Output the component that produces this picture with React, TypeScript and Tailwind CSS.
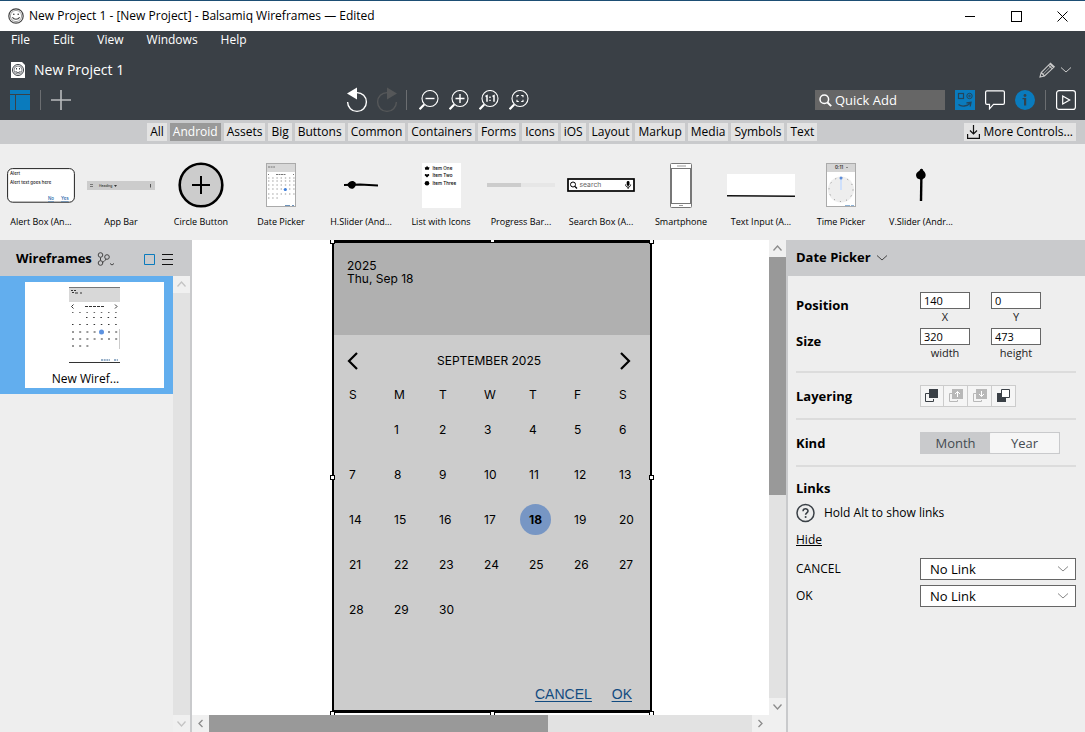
import { useState, type ReactNode } from "react";
import clsx from "clsx";

const MENUS = ["File", "Edit", "View", "Windows", "Help"];

const CATEGORIES = [
  "All",
  "Android",
  "Assets",
  "Big",
  "Buttons",
  "Common",
  "Containers",
  "Forms",
  "Icons",
  "iOS",
  "Layout",
  "Markup",
  "Media",
  "Symbols",
  "Text",
];

const WEEKDAYS = ["S", "M", "T", "W", "T", "F", "S"];

// September 2025 starts on a Monday
const WEEKS = [0, 1, 2, 3, 4].map((week) =>
  WEEKDAYS.map((_, day) => {
    const date = week * 7 + day;
    return date >= 1 && date <= 30 ? date : null;
  })
);

/* ---------- small icons ---------- */

function Smiley({ className }: { className?: string }) {
  return (
    <svg className={className} viewBox="0 0 16 16" fill="none" stroke="#444">
      <circle cx="8" cy="8" r="7.2" strokeWidth="1.2" fill="#fff" />
      <circle cx="8" cy="8" r="5.6" strokeWidth="0.5" />
      <circle cx="5.8" cy="6.2" r="0.8" fill="#333" stroke="none" />
      <circle cx="10.2" cy="6.2" r="0.8" fill="#333" stroke="none" />
      <path d="M4.4 9.2c1.4 2.8 5.8 2.8 7.2 0" strokeWidth="1.1" />
    </svg>
  );
}

function Chevron({ className }: { className?: string }) {
  return (
    <svg className={className} viewBox="0 0 12 6" width="12" height="6" fill="none" stroke="currentColor">
      <path d="M1 0.5l5 4.5 5-4.5" />
    </svg>
  );
}

function UndoIcon({ redo = false }: { redo?: boolean }) {
  return (
    <svg
      className={redo ? "-scale-x-100 text-[#555759]" : "text-white"}
      width="22"
      height="26"
      viewBox="0 0 22 26"
      fill="none"
      stroke="currentColor"
    >
      <path d="M11 5.6A9.4 9.4 0 1 1 1.6 15" strokeWidth="1.4" />
      <path d="M1 6.5L11 0.5v12z" fill="currentColor" stroke="none" />
    </svg>
  );
}

function ZoomIcon({ children }: { children: ReactNode }) {
  return (
    <svg width="20" height="21" viewBox="0 0 20 21" fill="none" stroke="#fff">
      <circle cx="11" cy="8.5" r="8" strokeWidth="1.1" />
      <path d="M5.2 14.4L0.6 19.2" strokeWidth="2.2" />
      {children}
    </svg>
  );
}

function ScrollArrow({ dir, faded }: { dir: "up" | "down" | "left" | "right"; faded?: boolean }) {
  const paths = {
    up: "M4.5 10.5L8.5 6l4 4.5",
    down: "M4.5 6.5l4 4.5 4-4.5",
    left: "M10.5 5L7 8.5l3.5 3.5",
    right: "M6.5 5L10 8.5 6.5 12",
  };
  return (
    <button
      type="button"
      aria-label={`Scroll ${dir}`}
      className={clsx("size-[17px] shrink-0 bg-[#f0f0f0]", faded ? "text-[#c4c4c4]" : "text-[#8c8c8c]")}
    >
      <svg width="17" height="17" viewBox="0 0 17 17" fill="none" stroke="currentColor" strokeWidth="1.3">
        <path d={paths[dir]} />
      </svg>
    </button>
  );
}

/* ---------- library thumbnails ---------- */

function CalendarThumb() {
  return (
    <svg width="30" height="44" viewBox="0 0 30 44">
      <rect x="0.5" y="0.5" width="29" height="43" fill="#fff" stroke="#aaa" />
      <rect x="1" y="1" width="28" height="8" fill="#d8d8d8" />
      <path d="M2 4h7" stroke="#777" strokeDasharray="2 0.6" />
      <path d="M10 11.5h10" stroke="#777" strokeDasharray="2 0.5" />
      <path d="M2 11.5h1M27 11.5h1" stroke="#777" />
      {[15, 18, 22, 26, 31].map((y) => (
        <path key={y} d={`M2 ${y}h27`} stroke="#999" strokeWidth="1.1" strokeDasharray="1.4 2.8" />
      ))}
      <path d="M2 35h10" stroke="#999" strokeWidth="1.1" strokeDasharray="1.4 2.8" />
      <circle cx="19.3" cy="26.5" r="1.6" fill="#3f7fdc" />
      <path d="M19 42.5h9" stroke="#6d93bb" strokeDasharray="5 2" />
    </svg>
  );
}

const CONTROLS: { label: string; art: ReactNode }[] = [
  {
    label: "Alert Box (An...",
    art: (
      <svg width="68" height="35" viewBox="0 0 68 35" fontFamily="Inter, sans-serif" fontSize="4.4">
        <rect x="0.6" y="0.6" width="66.8" height="33.6" rx="5" fill="#fff" stroke="#222" />
        <g fill="#222" fontWeight="500">
          <text x="3" y="7">Alert</text>
          <text x="3" y="16.4">Alert text goes here</text>
        </g>
        <g fill="#1c63a8" textDecoration="underline" fontWeight="500">
          <text x="41" y="32">No</text>
          <text x="54" y="32">Yes</text>
        </g>
      </svg>
    ),
  },
  {
    label: "App Bar",
    art: (
      <svg width="68" height="9" viewBox="0 0 68 9">
        <rect width="68" height="9" fill="#ccc" />
        <path d="M3 3.5h3M3 5.5h3" stroke="#777" />
        <text x="12" y="6" fontFamily="Inter, sans-serif" fontSize="3.4" fill="#111">Heading</text>
        <path d="M27 4h3l-1.5 2z" fill="#333" />
        <path d="M63.5 3v3.5" stroke="#555" />
      </svg>
    ),
  },
  {
    label: "Circle Button",
    art: (
      <svg width="46" height="46" viewBox="0 0 46 46" stroke="#000">
        <circle cx="23" cy="23" r="21.3" fill="#ccc" strokeWidth="2.6" />
        <path d="M14 23h18M23 14v18" strokeWidth="2" />
      </svg>
    ),
  },
  { label: "Date Picker", art: <CalendarThumb /> },
  {
    label: "H.Slider (And...",
    art: (
      <svg width="34" height="12" viewBox="0 0 34 12">
        <path d="M0 6l16-0.4 18 1" stroke="#000" strokeWidth="2" fill="none" />
        <path d="M3 6C5 2 9 0.5 11.5 3.5c1.5 4-2.500 8-6 5.500z" />
      </svg>
    ),
  },
  {
    label: "List with Icons",
    art: (
      <svg width="39" height="45" viewBox="0 0 39 45" fontFamily="Inter, sans-serif" fontWeight="500" fontSize="4.6">
        <rect width="39" height="45" fill="#fff" />
        <path d="M5 2.8l1 1.5h1.5L6.8 6.800H3.200L2.800 4.300h1.400z" />
        <path d="M5 14.5l-2.300-2.300c0-1.600 1.800-1.700 2.300-0.500 0.500-1.200 2.300-1.100 2.300 0.500z" />
        <circle cx="5" cy="20.2" r="2.3" />
        <text x="10.500" y="6.700">Item One</text>
        <text x="10.500" y="14">Item Two</text>
        <text x="10.500" y="21.700">Item Three</text>
      </svg>
    ),
  },
  {
    label: "Progress Bar...",
    art: (
      <svg width="68" height="4" viewBox="0 0 68 4">
        <rect width="68" height="4" fill="#e6e6e6" />
        <rect width="34" height="4" fill="#ccc" />
      </svg>
    ),
  },
  {
    label: "Search Box (A...",
    art: (
      <svg width="68" height="14" viewBox="0 0 68 14" fill="none">
        <rect x="1" y="1" width="66" height="12" fill="#fff" stroke="#000" strokeWidth="1.7" />
        <circle cx="6" cy="6.500" r="2.500" stroke="#000" />
        <path d="M8 8.500l2 2" stroke="#000" strokeWidth="1.2" />
        <text x="12.500" y="9.200" fontFamily="Inter, sans-serif" fontSize="6.800" fill="#666">search</text>
        <rect x="59.700" y="3" width="2.800" height="5" rx="1.400" fill="#000" />
        <path d="M58.500 6.500c0 3.500 5.200 3.500 5.200 0M61.100 9v2" stroke="#000" strokeWidth="0.9" />
      </svg>
    ),
  },
  {
    label: "Smartphone",
    art: (
      <svg width="22" height="45" viewBox="0 0 22 45" fill="#fff" stroke="#777">
        <rect x="0.5" y="0.5" width="21" height="44" rx="1" />
        <rect x="1.5" y="5.5" width="19" height="35" />
        <path d="M7 3h9M9 42.5h4" stroke="#999" />
      </svg>
    ),
  },
  {
    label: "Text Input (A...",
    art: (
      <svg width="68" height="23" viewBox="0 0 68 23">
        <rect width="68" height="22" fill="#fff" />
        <path d="M0 21.8l68 0.4" stroke="#111" strokeWidth="1.6" />
      </svg>
    ),
  },
  {
    label: "Time Picker",
    art: (
      <svg width="30" height="44" viewBox="0 0 30 44">
        <rect x="0.5" y="0.5" width="29" height="43" fill="#fff" stroke="#aaa" />
        <rect x="1" y="1" width="28" height="8" fill="#d5d5d5" />
        <text x="9" y="6.2" fontFamily="Inter, sans-serif" fontWeight="600" fontSize="4.500" fill="#333">0:11</text>
        <path d="M20 4.500h2" stroke="#888" />
        <circle cx="15" cy="26.500" r="13" fill="#eee" />
        <circle cx="15" cy="26.500" r="12" fill="none" stroke="#888" strokeDasharray="1 5.283" />
        <path d="M15 27V16" stroke="#cfe0fb" strokeWidth="2" />
        <circle cx="15" cy="15" r="1.500" fill="#5c8ddb" />
        <path d="M19 42.500h9" stroke="#8fb3d6" strokeDasharray="5 1" />
      </svg>
    ),
  },
  {
    label: "V.Slider (Andr...",
    art: (
      <svg width="12" height="34" viewBox="0 0 12 34">
        <path d="M6.500 1L6 33" stroke="#000" strokeWidth="2.4" />
        <path d="M6.500 0.500l1.500 1.700c3 2.500 3.300 5.500 1.800 7.500L6.500 12 2.500 10.500C0 7.500 1 4.500 4 3z" />
      </svg>
    ),
  },
];

/* ---------- page parts ---------- */

function TitleBar() {
  return (
    <header className="flex h-[31px] shrink-0 items-center border-t border-[#1d4e74] bg-white pl-2">
      <Smiley className="size-4" />
      <h1 className="ml-[5px] flex-1 text-xs">New Project 1 - [New Project] - Balsamiq Wireframes — Edited</h1>
      <div className="flex h-full items-center">
        <button type="button" aria-label="Minimize" className="flex h-full w-[46px] items-center justify-center">
          <span className="h-px w-[10px] bg-black" />
        </button>
        <button type="button" aria-label="Maximize" className="flex h-full w-[46px] items-center justify-center">
          <span className="size-[11px] border border-black" />
        </button>
        <button type="button" aria-label="Close" className="flex h-full w-[46px] items-center justify-center">
          <svg width="11" height="11" viewBox="0 0 11 11" stroke="#000">
            <path d="M0.5 0.5l10 10M10.5 0.5l-10 10" />
          </svg>
        </button>
      </div>
    </header>
  );
}

function Toolbar() {
  return (
    <div className="flex h-10 items-center pr-[9px] pl-[10px]">
      <button type="button" aria-label="Toggle navigator">
        <svg width="20" height="20" viewBox="0 0 20 20" fill="#0a7bbd">
          <path d="M0 0h20v4H0zM0 5h5v15H0zM6 5h14v15H6z" />
        </svg>
      </button>
      <span className="mx-[10px] h-5 w-px bg-[#6b6e71]" />
      <button type="button" aria-label="Add wireframe">
        <svg width="20" height="20" viewBox="0 0 20 20" stroke="#b9bbbd" strokeWidth="1.6">
          <path d="M0 10h20M10 0v20" />
        </svg>
      </button>

      <div className="flex flex-1 items-center justify-center pr-3">
        <button type="button" aria-label="Undo">
          <UndoIcon />
        </button>
        <button type="button" aria-label="Redo" className="ml-2">
          <UndoIcon redo />
        </button>
        <span className="mr-3 ml-2 h-5 w-px bg-[#6b6e71]" />
        <div className="flex gap-[10px]">
          <button type="button" aria-label="Zoom out">
            <ZoomIcon>
              <path d="M6.500 8.500h9" strokeWidth="1.4" />
            </ZoomIcon>
          </button>
          <button type="button" aria-label="Zoom in">
            <ZoomIcon>
              <path d="M6.500 8.500h9M11 4v9" strokeWidth="1.4" />
            </ZoomIcon>
          </button>
          <button type="button" aria-label="Actual size">
            <ZoomIcon>
              <path d="M6.500 6.500l1.500-0.800v6M13.500 6.500l1.500-0.800v6" strokeWidth="1.5" />
              <path d="M11 6.500v1.400M11 9.700v1.400" strokeWidth="1.4" />
            </ZoomIcon>
          </button>
          <button type="button" aria-label="Zoom to fit">
            <ZoomIcon>
              <path d="M9.800 5.500H8V7.300M12.200 5.500H14V7.300M8 9.700V11.500H9.800M14 9.700V11.500H12.200" strokeWidth="1.1" />
            </ZoomIcon>
          </button>
        </div>
      </div>

      <label className="flex h-5 w-[130px] items-center bg-[#666] pl-1">
        <svg className="shrink-0" width="13" height="13" viewBox="0 0 13 13" fill="none" stroke="#fff">
          <circle cx="5.300" cy="5.300" r="4.300" strokeWidth="1.5" />
          <path d="M8.500 8.500l3.700 3.700" strokeWidth="1.9" />
        </svg>
        <input
          aria-label="Quick Add"
          placeholder="Quick Add"
          className="ml-[3px] w-full min-w-0 bg-transparent text-[13px] leading-5 text-white outline-none placeholder:text-white"
        />
      </label>
      <div className="ml-[10px] flex items-center gap-[10px]">
        <button type="button" aria-label="UI library">
          <svg width="20" height="20" viewBox="0 0 20 20" fill="none" stroke="#24455c">
            <rect width="20" height="20" fill="#0a7bbd" stroke="none" />
            <rect x="3.500" y="3.500" width="5" height="5" strokeWidth="1.2" />
            <circle cx="14.500" cy="6" r="2.700" />
            <circle cx="14.500" cy="6" r="0.800" />
            <path d="M3.500 14.500c3 2.500 8.500 2 12-1.500M11.500 13l4.500-0.800-0.800 4.300" strokeWidth="1.3" />
          </svg>
        </button>
        <button type="button" aria-label="Comments">
          <svg width="20" height="20" viewBox="0 0 20 20" fill="none" stroke="#fff" strokeWidth="1.2">
            <path d="M2 0.800h16q1.400 0 1.400 1.400v10.800q0 1.400-1.400 1.400H8.500L4.500 18.800V14.400H2Q0.600 14.400 0.600 13V2.200Q0.600 0.800 2 0.800z" />
          </svg>
        </button>
        <button type="button" aria-label="Properties">
          <svg width="20" height="20" viewBox="0 0 20 20">
            <circle cx="10" cy="10" r="10" fill="#0a7bbd" />
            <path d="M7.500 8h3.700v7.500H9V9.200H7.500z" fill="#33434e" />
            <circle cx="10" cy="5.500" r="1.400" fill="#33434e" />
          </svg>
        </button>
        <span className="h-5 w-px bg-[#6b6e71]" />
        <button type="button" aria-label="Present">
          <svg width="20" height="20" viewBox="0 0 20 20" fill="none" stroke="#fff" strokeWidth="1.2">
            <rect x="0.600" y="0.600" width="18.800" height="18.800" rx="2.500" />
            <path d="M6.700 6l7 4-7 4z" />
          </svg>
        </button>
      </div>
    </div>
  );
}

function Library() {
  const [active, setActive] = useState("Android");
  return (
    <section>
      <div className="flex h-6 items-center bg-[#c9cacc] pr-[9px] text-xs leading-[18px]">
        <div className="flex flex-1 justify-center gap-[3px]">
          {CATEGORIES.map((name) => (
            <button
              key={name}
              type="button"
              onClick={() => setActive(name)}
              className={clsx("px-[3px]", name === active ? "bg-[#999] text-white" : "bg-[#e3e3e3]")}
            >
              {name}
            </button>
          ))}
        </div>
        <button type="button" className="flex items-center gap-[3px] bg-[#e3e3e3] px-[3px]">
          <svg width="13" height="14" viewBox="0 0 13 14" fill="none" stroke="#111" strokeWidth="1.2">
            <path d="M6.500 0v8.500M3 5.500l3.500 3.500L10 5.500M0.600 9v4.400h11.800V9" />
          </svg>
          More Controls...
        </button>
      </div>
      <ul className="flex h-24 overflow-hidden bg-[#eee] pl-px">
        {CONTROLS.map((control) => (
          <li key={control.label} className="flex w-20 shrink-0 flex-col items-center pt-[17px]">
            <div className="flex h-12 items-center">{control.art}</div>
            <span className="mt-[6px] text-[9px] leading-[14px] whitespace-nowrap">{control.label}</span>
          </li>
        ))}
      </ul>
    </section>
  );
}

function Navigator() {
  return (
    <aside className="flex w-48 shrink-0 flex-col border-r-2 border-[#c9cacc] bg-[#eee]">
      <div className="flex h-9 shrink-0 items-center bg-[#c9cacc] pt-[2px] pr-[17px] pl-4">
        <h2 className="text-[13px] font-bold">Wireframes</h2>
        <button type="button" aria-label="Branches" className="ml-[5px] flex-1">
          <svg width="18" height="14" viewBox="0 0 18 14" fill="none" stroke="#444">
            <circle cx="3.500" cy="3" r="2.300" />
            <circle cx="3.500" cy="11" r="2.300" />
            <circle cx="10" cy="5" r="2.300" />
            <path d="M3.500 5.500v3M9 7c-1 2-2.500 3-4 3.500M13 11.500l2 1.500 2-1.500" />
          </svg>
        </button>
        <button type="button" aria-label="Thumbnail view">
          <svg width="11" height="11" viewBox="0 0 11 11" fill="none" stroke="#0a7bbd">
            <path d="M0.5 0.5h10v10h-10z" />
          </svg>
        </button>
        <button type="button" aria-label="List view" className="ml-[7px]">
          <svg width="11" height="11" viewBox="0 0 11 11" stroke="#111">
            <path d="M0 0.5h11M0 5.5h11M0 10.5h11" />
          </svg>
        </button>
      </div>
      <div className="flex min-h-0 flex-1">
        <div className="flex-1">
          <button type="button" className="flex w-full bg-[#62aeee] py-[6px] pr-[9px] pl-[25px]">
            <span className="flex flex-1 flex-col items-center bg-white pt-[5px]">
              <svg width="51" height="76" viewBox="0 0 51 76" stroke="#333">
                <rect width="51" height="15" fill="#d8d8d8" stroke="none" />
                <path d="M0 0.500h51" stroke="#777" />
                <path d="M2 3.500h2M5 3.500h2M3 5.500h2M6 6h3M11 6h2" />
                <path d="M4.500 17.500l-2 2 2 2M46 17.500l2 2-2 2" fill="none" />
                <path d="M16 19.500h19" strokeDasharray="3 1" />
                <path d="M3 25.500h47" stroke="#666" strokeDasharray="1.500 5.700" />
                <path d="M17 30.500h33" strokeDasharray="1.500 5.700" />
                <path d="M3 37.500h47" strokeDasharray="1.500 5.700" />
                <path d="M3 45h47M3 52h47M3 59h17" strokeDasharray="2 5.200" />
                <circle cx="32.500" cy="45" r="2.500" fill="#5c92e0" stroke="none" />
                <path d="M32 73h9M45 73h4" stroke="#2d5f91" strokeDasharray="2 0.700" />
                <path d="M0 75.500h51" />
                <path d="M50.500 42v20" stroke="#ccc" />
              </svg>
              <span className="mt-[7px] pr-[18px] text-xs leading-[18px]">New Wiref...</span>
            </span>
          </button>
        </div>
        <div className="flex w-[17px] flex-col justify-between bg-[#e2e2e2]">
          <ScrollArrow dir="up" faded />
          <ScrollArrow dir="down" faded />
        </div>
      </div>
    </aside>
  );
}

function Handle({ className }: { className: string }) {
  return <span className={clsx("absolute size-[5px] border border-black bg-white", className)} />;
}

function DatePicker() {
  return (
    <div className="absolute top-0 left-[140px] flex h-[473px] w-80 flex-col border-2 border-t-3 border-b-3 border-black bg-[#ccc] font-[Inter,sans-serif] text-xs">
      <div className="h-[92px] bg-[#b0b0b0] px-[13px] pt-4 leading-[13px]">
        <p>2025</p>
        <p>Thu, Sep 18</p>
      </div>
      <div className="flex h-12 items-center justify-between pt-1 pr-[19px] pl-[13px]">
        <button type="button" aria-label="Previous month">
          <svg width="12" height="18" viewBox="0 0 12 18" fill="none" stroke="#000" strokeWidth="2.2">
            <path d="M10 1L2 9l8 8" />
          </svg>
        </button>
        <span>SEPTEMBER 2025</span>
        <button type="button" aria-label="Next month">
          <svg width="12" height="18" viewBox="0 0 12 18" fill="none" stroke="#000" strokeWidth="2.2">
            <path d="M2 1l8 8-8 8" />
          </svg>
        </button>
      </div>
      <table className="ml-[6px] table-fixed">
        <thead>
          <tr className="h-6">
            {WEEKDAYS.map((day, i) => (
              <th key={i} className={clsx("pl-[9px] text-left font-normal", i < 6 && "w-[45px]")}>
                {day}
              </th>
            ))}
          </tr>
        </thead>
        <tbody>
          {WEEKS.map((week, i) => (
            <tr key={i} className="h-[45px]">
              {week.map((date, j) => (
                <td key={j} className="p-0">
                  <span
                    className={clsx(
                      "flex size-[31px] items-center pl-[9px]",
                      date === 18 && "rounded-full bg-[#7796c4] font-bold"
                    )}
                  >
                    {date}
                  </span>
                </td>
              ))}
            </tr>
          ))}
        </tbody>
      </table>
      <div className="mt-auto flex justify-end gap-5 pr-[18px] pb-[6px] font-['Liberation_Sans',sans-serif] text-sm leading-5 text-[#124b80] underline underline-offset-2">
        <a href="#cancel">CANCEL</a>
        <a href="#ok">OK</a>
      </div>
      <Handle className="-top-1 -left-1" />
      <Handle className="-top-[5px] left-[156px]" />
      <Handle className="-top-1 -right-1" />
      <Handle className="top-[232px] -left-1" />
      <Handle className="top-[232px] -right-1" />
      <Handle className="-bottom-[6px] -left-1" />
      <Handle className="-bottom-[6px] left-[156px]" />
      <Handle className="-right-1 -bottom-[6px]" />
    </div>
  );
}

function Canvas() {
  return (
    <main className="flex min-w-0 flex-1">
      <div className="flex min-w-0 flex-1 flex-col">
        <div className="relative flex-1 overflow-hidden bg-white">
          <DatePicker />
        </div>
        <div className="flex h-[17px] bg-[#e2e2e2]">
          <ScrollArrow dir="left" />
          <div className="flex-1">
            <div className="h-full w-5/8 bg-[#999]" />
          </div>
          <ScrollArrow dir="right" />
        </div>
      </div>
      <div className="flex w-[17px] flex-col bg-[#e2e2e2]">
        <ScrollArrow dir="up" />
        <div className="flex-1">
          <div className="h-[54%] bg-[#999]" />
        </div>
        <ScrollArrow dir="down" />
        <div className="size-[17px] bg-[#f0f0f0]" />
      </div>
    </main>
  );
}

function NumberField({ id, label, value }: { id: string; label: string; value: string }) {
  return (
    <div className="flex w-[50px] flex-col items-center">
      <input
        id={id}
        defaultValue={value}
        className="h-[17px] w-full border border-[#666] bg-white px-[3px] text-[11px] leading-[15px]"
      />
      <label htmlFor={id} className="text-[11px] leading-4 text-[#222]">
        {label}
      </label>
    </div>
  );
}

function Row({ title, className, children }: { title: string; className?: string; children: ReactNode }) {
  return (
    <div className={clsx("flex", className)}>
      <h3 className="w-[124px] text-[13px] leading-[26px] font-bold">{title}</h3>
      {children}
    </div>
  );
}

function LinkSelect({ name }: { name: string }) {
  const id = `link-${name.toLowerCase()}`;
  return (
    <div className="flex h-[22px] items-center">
      <label htmlFor={id} className="w-[124px] text-xs">
        {name}
      </label>
      <div className="relative flex flex-1">
        <select
          id={id}
          className="h-[22px] w-full appearance-none border border-[#666] bg-white pl-[9px] text-[13px] leading-5"
        >
          <option>No Link</option>
        </select>
        <Chevron className="pointer-events-none absolute top-2 right-[7px] text-[#888]" />
      </div>
    </div>
  );
}

const LAYERING: { label: string; art: ReactNode; disabled?: boolean }[] = [
  {
    label: "Bring to front",
    art: (
      <>
        <path d="M4 4.5H0.5v8h8V10" fill="none" stroke="#3a4046" />
        <path d="M4 0h9v9H4z" fill="#3a4046" />
      </>
    ),
  },
  {
    label: "Bring forward",
    disabled: true,
    art: (
      <>
        <path d="M3 4.5H0.5v8h8V11" fill="none" stroke="#b8b8b8" />
        <path d="M3 0h11v10H3z" fill="#b8b8b8" />
        <path d="M8.5 8V2.5M6 5l2.500-2.500L11 5" fill="none" stroke="#fff" />
      </>
    ),
  },
  {
    label: "Send backward",
    disabled: true,
    art: (
      <>
        <path d="M3 4.5H0.5v8h8V11" fill="none" stroke="#b8b8b8" />
        <path d="M3 0h11v10H3z" fill="#b8b8b8" />
        <path d="M8.5 2v5.500M6 5l2.500 2.500L11 5" fill="none" stroke="#fff" />
      </>
    ),
  },
  {
    label: "Send to back",
    art: (
      <>
        <path d="M0 4h9v9H0z" fill="#3a4046" />
        <path d="M4.5 0.5h8v8h-8z" fill="#fff" stroke="#3a4046" />
      </>
    ),
  },
];

function Inspector() {
  const [kind, setKind] = useState("Month");
  return (
    <aside className="w-[299px] shrink-0 border-l-2 border-[#c9cacc] bg-[#eee]">
      <div className="flex h-9 items-center gap-[5px] bg-[#c9cacc] pl-2">
        <h2 className="text-[13px] font-bold">Date Picker</h2>
        <Chevron className="text-[#444]" />
      </div>
      <div className="pr-[9px] pl-2">
        <Row title="Position" className="pt-4">
          <div className="flex gap-[21px]">
            <NumberField id="x" label="X" value="140" />
            <NumberField id="y" label="Y" value="0" />
          </div>
        </Row>
        <Row title="Size" className="pt-[3px]">
          <div className="flex gap-[21px]">
            <NumberField id="width" label="width" value="320" />
            <NumberField id="height" label="height" value="473" />
          </div>
        </Row>
        <hr className="mt-[10px] border-t-2 border-[#dcdcdc]" />
        <Row title="Layering" className="h-[45px] items-center">
          <div className="flex border border-[#ccc] bg-[#f5f5f5]">
            {LAYERING.map((item, i) => (
              <button
                key={item.label}
                type="button"
                aria-label={item.label}
                disabled={item.disabled}
                className={clsx("flex h-5 items-center justify-center", i ? "w-6 border-l border-[#ccc]" : "w-[22px]")}
              >
                <svg width="14" height="13" viewBox="0 0 14 13">
                  {item.art}
                </svg>
              </button>
            ))}
          </div>
        </Row>
        <hr className="border-t-2 border-[#dcdcdc]" />
        <Row title="Kind" className="h-[45px] items-center">
          <div className="flex h-[22px] w-[140px] border border-[#c9cacc] text-[13px] leading-5 text-[#444b51]">
            {["Month", "Year"].map((name) => (
              <button
                key={name}
                type="button"
                onClick={() => setKind(name)}
                className={clsx("flex-1", kind === name ? "bg-[#c9cacc]" : "rounded-xs bg-[#f6f6f6]")}
              >
                {name}
              </button>
            ))}
          </div>
        </Row>
        <hr className="border-t-2 border-[#dcdcdc]" />
        <h3 className="mt-[11px] text-[13px] leading-5 font-bold">Links</h3>
        <div className="mt-[5px] flex items-center gap-2 text-xs">
          <svg width="20" height="20" viewBox="0 0 20 20" fill="none" stroke="#3a4046">
            <circle cx="9.500" cy="10" r="8.500" strokeWidth="1.5" />
            <path d="M7 8.200c0-3.300 5-3.200 5-0.300 0 1.900-2.400 1.900-2.400 3.900" strokeWidth="1.6" />
            <circle cx="9.600" cy="14" r="1" fill="#3a4046" stroke="none" />
          </svg>
          Hold Alt to show links
        </div>
        <a href="#hide" className="mt-2 block w-fit text-xs leading-[18px] underline">
          Hide
        </a>
        <div className="mt-[9px] flex flex-col gap-[5px]">
          <LinkSelect name="CANCEL" />
          <LinkSelect name="OK" />
        </div>
      </div>
    </aside>
  );
}

export default function App() {
  return (
    <div className="flex h-screen flex-col overflow-hidden font-['Open_Sans','Noto_Sans',sans-serif] text-black">
      <TitleBar />
      <div className="shrink-0 bg-[#3a4046] text-white">
        <nav className="flex h-[17px] items-center gap-[23px] pl-[11px] text-xs leading-4">
          {MENUS.map((menu) => (
            <button key={menu} type="button">
              {menu}
            </button>
          ))}
        </nav>
        <div className="flex h-8 items-center pt-3 pr-[13px] pl-[11px]">
          <svg width="14" height="16" viewBox="0 0 14 16" fill="none" stroke="#3a4046">
            <path d="M0 0h11l3 3v13H0z" fill="#fff" stroke="none" />
            <circle cx="7" cy="8" r="5.500" />
            <circle cx="7" cy="8" r="4" strokeWidth="0.6" />
            <path d="M5.500 6v1.500M8.500 6v1.500M4.500 9c1 2 4 2 5 0" />
          </svg>
          <h2 className="ml-[9px] flex-1 text-sm leading-5">New Project 1</h2>
          <button type="button" aria-label="Edit options" className="flex items-center gap-1 text-[#c9c9c9]">
            <svg width="17" height="16" viewBox="0 0 17 16" fill="none" stroke="currentColor" strokeWidth="1.1">
              <path d="M1 15l1.200-4.500L11.500 1.200l3.800 3.600L5.500 14zM2.200 10.500L5.500 14M9.500 3.200l3.800 3.600M10.800 1.900l3.800 3.600" />
              <path d="M4 12.200L12.300 4" strokeWidth="0.7" />
            </svg>
            <Chevron />
          </button>
        </div>
        <Toolbar />
      </div>
      <Library />
      <div className="flex min-h-0 flex-1">
        <Navigator />
        <Canvas />
        <Inspector />
      </div>
    </div>
  );
}
